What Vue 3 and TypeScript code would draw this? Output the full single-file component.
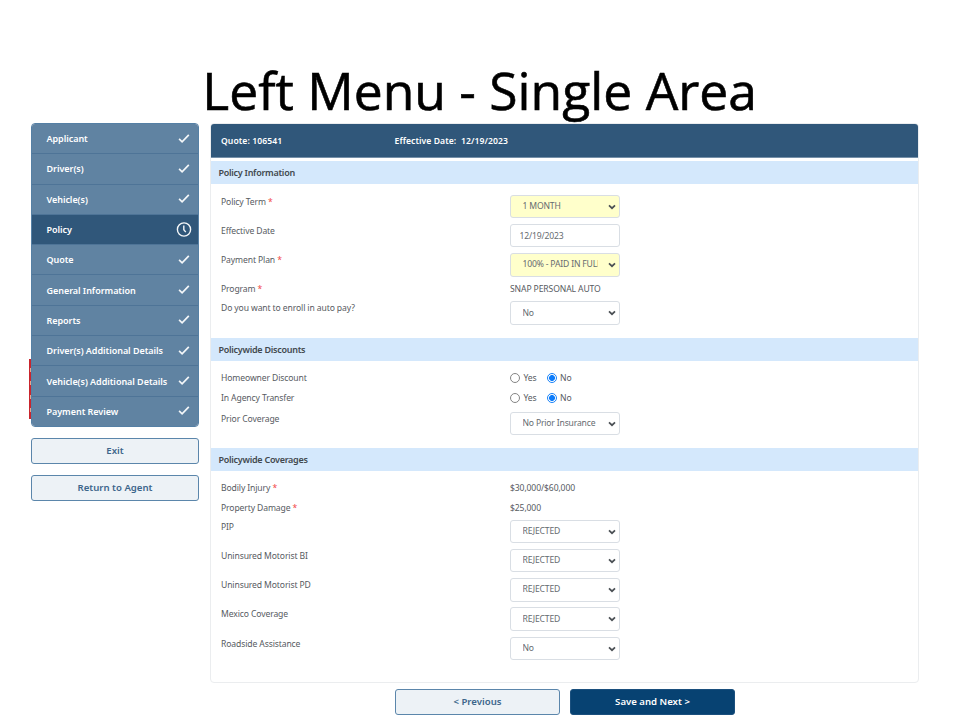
<template>
  <div class="slide">
    <h1 class="title"><span>Left Menu - Single Area</span></h1>

    <div class="error-strip"><i></i><i></i><i></i><i></i></div>

    <div class="layout">
      <aside class="sidebar">
        <nav class="menu">
          <a
            v-for="item in menuItems"
            :key="item"
            class="menu-item"
            :class="{ active: item === activeItem }"
            @click="activeItem = item"
          >
            <span>{{ item }}</span>
            <svg v-if="item === activeItem" class="clock" viewBox="0 0 16 16">
              <circle cx="8" cy="7.5" r="6.6" />
              <path d="M7.8 3.4V7.7L9.8 10.1" />
            </svg>
            <svg v-else class="check" viewBox="0 0 12 10">
              <path d="M1.1 4.9L4.1 7.8L10.8 0.9" />
            </svg>
          </a>
        </nav>
        <button class="btn btn-light">Exit</button>
        <button class="btn btn-light">Return to Agent</button>
      </aside>

      <main class="content">
        <div class="panel">
          <header class="panel-header">
            <span class="quote">Quote: 106541</span>
            <span>Effective Date:&nbsp; 12/19/2023</span>
          </header>

          <section v-for="section in sections" :key="section.title" class="section">
            <h2>{{ section.title }}</h2>
            <div class="rows">
              <div v-for="field in section.fields" :key="field.label" class="row" :class="field.type">
                <label>{{ field.label }} <b v-if="field.required">*</b></label>

                <div v-if="field.type === 'select'" class="select-wrap">
                  <select class="control" :class="{ highlight: field.highlight }">
                    <option>{{ field.value }}</option>
                  </select>
                  <svg class="chevron" viewBox="0 0 8 6"><path d="M1 1.3L4 4.2L7 1.3" /></svg>
                </div>

                <input v-else-if="field.type === 'input'" v-model="field.value" class="control date" type="text" />

                <div v-else-if="field.type === 'radio'" class="radios">
                  <label v-for="option in ['Yes', 'No']" :key="option">
                    <input v-model="field.value" type="radio" :name="field.label" :value="option" />
                    <span>{{ option }}</span>
                  </label>
                </div>

                <span v-else class="plain">{{ field.value }}</span>
              </div>
            </div>
          </section>
        </div>

        <footer class="actions">
          <button class="btn btn-light">&lt; Previous</button>
          <button class="btn btn-dark">Save and Next &gt;</button>
        </footer>
      </main>
    </div>
  </div>
</template>

<script setup lang="ts">
import { ref } from 'vue';

interface Field {
  label: string
  type: 'select' | 'input' | 'radio' | 'text'
  value: string
  required?: boolean
  highlight?: boolean
}

const menuItems = [
  'Applicant',
  'Driver(s)',
  'Vehicle(s)',
  'Policy',
  'Quote',
  'General Information',
  'Reports',
  'Driver(s) Additional Details',
  'Vehicle(s) Additional Details',
  'Payment Review',
];
const activeItem = ref('Policy');

const sections = ref<{ title: string; fields: Field[] }[]>([
  {
    title: 'Policy Information',
    fields: [
      { label: 'Policy Term', type: 'select', value: '1 MONTH', required: true, highlight: true },
      { label: 'Effective Date', type: 'input', value: '12/19/2023' },
      { label: 'Payment Plan', type: 'select', value: '100% - PAID IN FULL', required: true, highlight: true },
      { label: 'Program', type: 'text', value: 'SNAP PERSONAL AUTO', required: true },
      { label: 'Do you want to enroll in auto pay?', type: 'select', value: 'No' },
    ],
  },
  {
    title: 'Policywide Discounts',
    fields: [
      { label: 'Homeowner Discount', type: 'radio', value: 'No' },
      { label: 'In Agency Transfer', type: 'radio', value: 'No' },
      { label: 'Prior Coverage', type: 'select', value: 'No Prior Insurance' },
    ],
  },
  {
    title: 'Policywide Coverages',
    fields: [
      { label: 'Bodily Injury', type: 'text', value: '$30,000/$60,000', required: true },
      { label: 'Property Damage', type: 'text', value: '$25,000', required: true },
      { label: 'PIP', type: 'select', value: 'REJECTED' },
      { label: 'Uninsured Motorist BI', type: 'select', value: 'REJECTED' },
      { label: 'Uninsured Motorist PD', type: 'select', value: 'REJECTED' },
      { label: 'Mexico Coverage', type: 'select', value: 'REJECTED' },
      { label: 'Roadside Assistance', type: 'select', value: 'No' },
    ],
  },
]);
</script>

<style>
body {
  margin: 0;
  background: #fff;
}
</style>

<style scoped>
* {
  box-sizing: border-box;
}

.slide {
  position: relative;
  width: 960px;
  height: 720px;
  overflow: hidden;
  background: #fff;
  color: #575b5f;
  font-family: "Noto Sans", "Open Sans", sans-serif;
  font-size: 8.6px;
  letter-spacing: -0.12px;
}

.title {
  height: 123px;
  margin: 0;
  padding-top: 55px;
  text-align: center;
  color: #000;
  font: 400 52px/70px "Open Sans", sans-serif;
  letter-spacing: 0;
  white-space: nowrap;
  -webkit-text-stroke: 0.6px #000;
}

.title span {
  display: inline-block;
  transform: scaleX(0.992);
}

/* sliver of the error box that peeks out from behind the menu */
.error-strip {
  position: absolute;
  left: 29px;
  top: 359px;
  width: 3px;
  height: 60px;
  padding-top: 9px;
  background: #c9252d;
}

.error-strip i {
  display: block;
  width: 1px;
  height: 4px;
  margin: 0 0 9.3px 1px;
  background: #e9a58c;
}

.layout {
  position: relative;
  display: flex;
  gap: 11px;
  padding-left: 31px;
}

.sidebar {
  width: 168px;
}

.menu {
  margin-bottom: 11px;
  border: 1px solid #5580a5;
  border-radius: 4px;
  overflow: hidden;
}

.menu-item {
  display: flex;
  align-items: center;
  justify-content: space-between;
  height: 30.3px;
  padding: 0 8px 0 14.5px;
  border-bottom: 1px solid #4e7497;
  background: #6083a2;
  color: #fff;
  font-size: 9px;
  font-weight: 600;
  letter-spacing: -0.04px;
  white-space: nowrap;
  cursor: pointer;
}

.menu-item:last-child {
  height: 29.3px;
  border-bottom: 0;
}

.menu-item.active {
  padding-right: 6.5px;
  background: #30577a;
}

.menu-item svg,
.chevron {
  flex: none;
  fill: none;
  stroke: #f4f7f9;
  stroke-width: 1.7;
}

.check {
  width: 12px;
  height: 10px;
}

.menu-item .clock {
  width: 16px;
  height: 16px;
  stroke-width: 1.4;
}

.btn {
  display: block;
  height: 26px;
  padding: 0;
  border-radius: 3px;
  font: 600 9.6px/24px "Noto Sans", sans-serif;
  letter-spacing: 0;
  cursor: pointer;
}

.btn-light {
  border: 1px solid #5b86ab;
  background: #edf2f6;
  color: #3d668b;
}

.btn-dark {
  border: 1px solid #1b507e;
  background: #074272;
  color: #fff;
}

.sidebar .btn {
  width: 100%;
  margin-bottom: 11px;
}

.content {
  width: 709px;
}

.panel {
  height: 560px;
  border: 1px solid #ebedef;
  border-radius: 4px;
}

.panel-header {
  display: flex;
  align-items: center;
  height: 34px;
  margin-bottom: 3.4px;
  padding: 1px 10px 0;
  border-bottom: 1px solid #7590a9;
  border-radius: 3px 3px 0 0;
  background: #30577a;
  color: #fff;
  font-size: 8.6px;
  font-weight: 600;
  letter-spacing: 0.08px;
}

.quote {
  width: 173.5px;
}

h2 {
  height: 23px;
  margin: 0;
  padding-left: 7.5px;
  background: #d4e8fc;
  color: #42484e;
  font-size: 9px;
  font-weight: 600;
  letter-spacing: -0.27px;
  line-height: 24px;
}

.rows {
  padding: 10.3px 0 7.3px 10px;
}

.row {
  display: grid;
  grid-template-columns: 289px 1fr;
  height: 29.2px;
  line-height: 14.6px;
}

.row.text {
  height: 19.2px;
}

.row.radio {
  height: 20.2px;
}

.row b {
  color: #f24b4b;
  font-weight: 400;
}

.select-wrap {
  position: relative;
  width: 110px;
}

.control {
  display: block;
  width: 110px;
  height: 23.5px;
  margin: 0;
  padding: 0 21px 0 11.5px;
  border: 1px solid #d9dee4;
  border-radius: 3px;
  outline: none;
  appearance: none;
  background: #fff;
  color: #666b70;
  font: 400 8.6px/21px "Noto Sans", sans-serif;
  letter-spacing: -0.18px;
}

.control.highlight {
  background: #ffffcb;
}

.control.date {
  padding: 0 8.5px;
}

.chevron {
  position: absolute;
  top: 9px;
  right: 4px;
  width: 8px;
  height: 6px;
  stroke: #4a4f54;
  pointer-events: none;
}

.radios {
  display: flex;
}

.radios label {
  display: flex;
  align-items: center;
  width: 36.5px;
  height: 14px;
}

.radios input {
  width: 10px;
  height: 10px;
  margin: 0 3.5px 0 0;
  border: 1px solid #858585;
  border-radius: 50%;
  appearance: none;
}

.radios input:checked {
  border-color: #1882f8;
  background: radial-gradient(circle, #0b7bfb 0 2.6px, #fff 3.3px);
}

.actions {
  display: flex;
  gap: 10px;
  padding: 6px 0 0 185px;
}

.actions .btn {
  width: 165px;
}
</style>
